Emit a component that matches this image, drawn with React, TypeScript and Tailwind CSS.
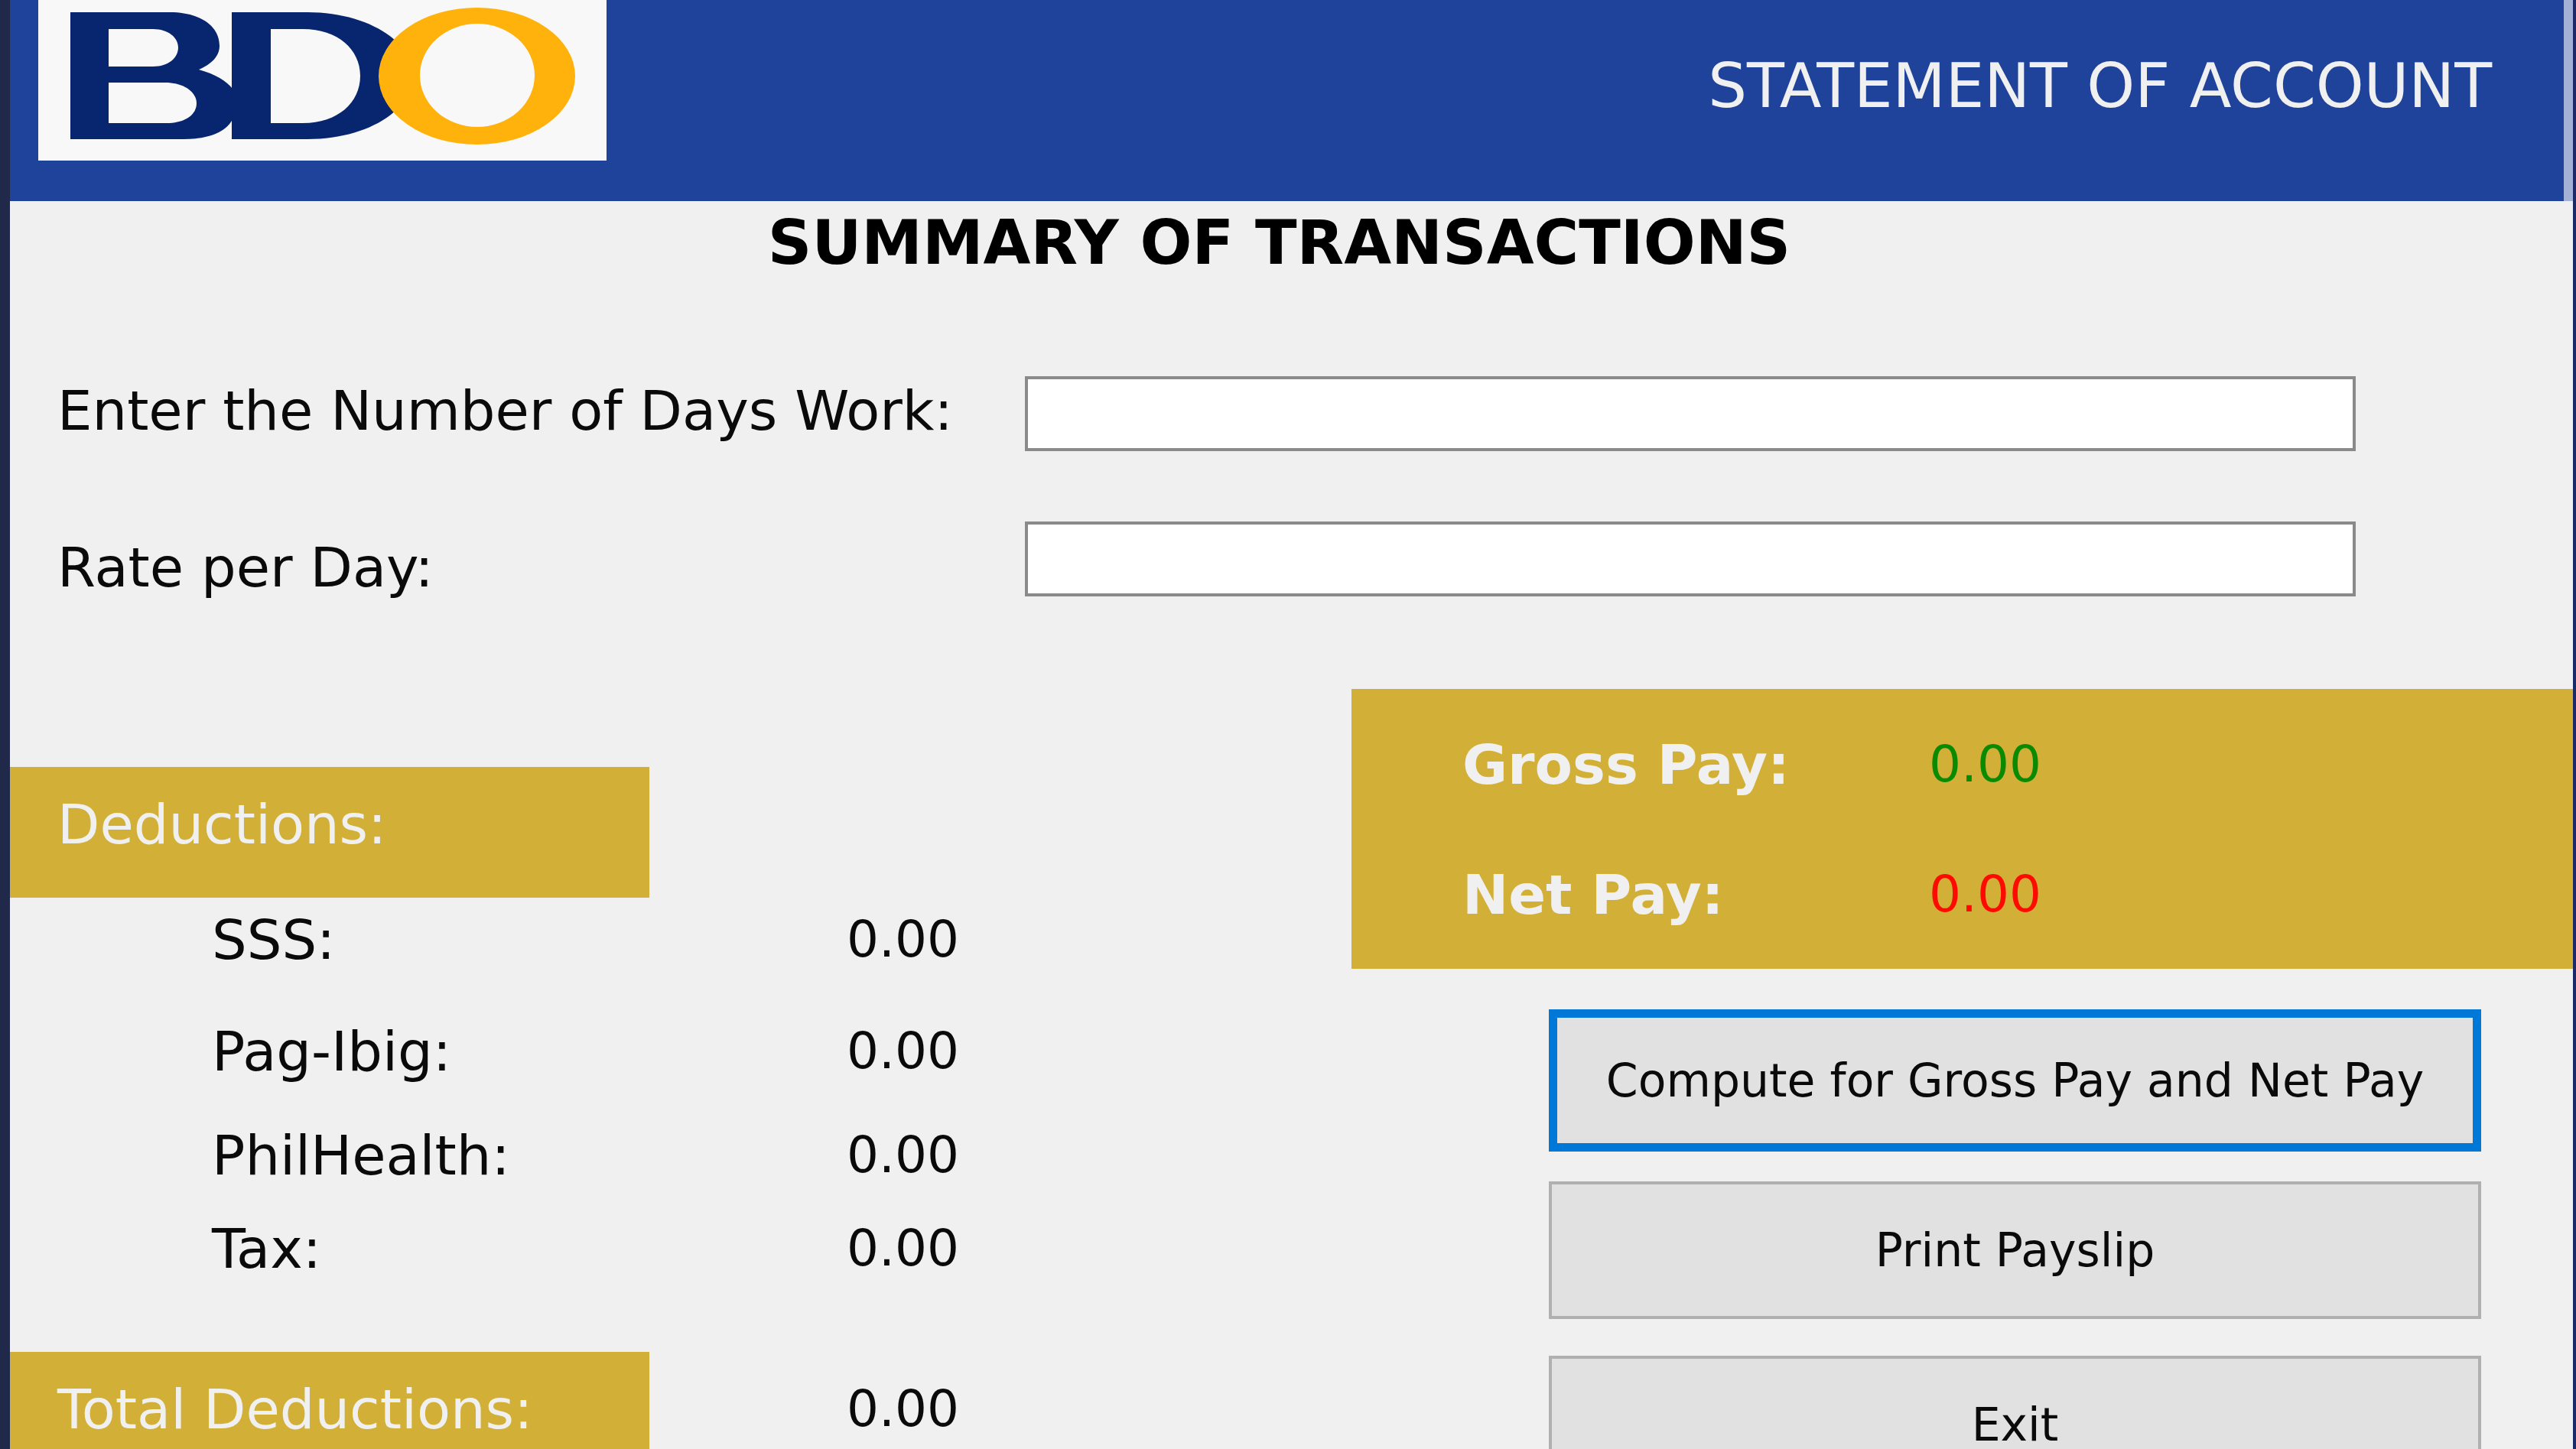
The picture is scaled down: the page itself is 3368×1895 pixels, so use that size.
import React from "react";

function Logo() {
  return (
    <svg
      role="img"
      aria-label="BDO"
      viewBox="0 0 743 210"
      className="h-[210px] w-[743px] shrink-0 bg-[#f8f8f8]"
    >
      <g fill="#08266f" fillRule="evenodd">
        <path d="M42 16H172C212 16 237 34 237 60C237 74 226 84 210 91C232 97 246 106 254 116L262 138L254 156C246 172 224 182 190 182H42ZM92 38V87H150C170 87 183 76 183 62C183 49 170 38 150 38ZM92 108V161H168C192 161 207 150 207 135C207 120 190 108 166 108Z" />
        <path d="M253 16H352C430 16 490 54 490 99C490 144 430 182 352 182H253ZM304 38V161H346C392 161 421 134 421 99C421 65 392 38 346 38Z" />
      </g>
      <ellipse cx="574" cy="99" rx="75" ry="68" fill="#f8f8f8" />
      <path
        fill="#ffb20b"
        fillRule="evenodd"
        d="M445 99.500A128.500 89.500 0 1 1 702 99.500A128.500 89.500 0 1 1 445 99.500ZM499 98.500A75 67.500 0 1 0 649 98.500A75 67.500 0 1 0 499 98.500Z"
      />
    </svg>
  );
}

const fields = [
  { id: "days", label: "Enter the Number of Days Work:" },
  { id: "rate", label: "Rate per Day:" },
];

const deductions = [
  { name: "SSS:", amount: "0.00", gap: "mt-[15px]" },
  { name: "Pag-Ibig:", amount: "0.00", gap: "mt-[66px]" },
  { name: "PhilHealth:", amount: "0.00", gap: "mt-[56px]" },
  { name: "Tax:", amount: "0.00", gap: "mt-[42px]" },
];

export default function App() {
  return (
    <div className="flex h-screen overflow-hidden border-r-4 border-l-[13px] border-r-[#1c2a66] border-l-[#20294a] bg-[#f0f0f0] font-['DejaVu_Sans',sans-serif] text-[72px] leading-[80px] text-[#0a0a0a]">
      <div className="min-w-0 flex-1">
        <header className="flex h-[263px] items-start justify-between border-r-[12px] border-[#a3b1d6] bg-[#1f439a] pl-[37px]">
          <Logo />
          <p className="pt-[73px] pr-[94px] text-[80px] whitespace-nowrap text-[#f0f0f0]">
            STATEMENT OF ACCOUNT
          </p>
        </header>

        <main>
          <h1 className="mt-[15px] pr-[32px] text-center text-[80px] font-bold whitespace-nowrap text-black">
            SUMMARY OF TRANSACTIONS
          </h1>

          <form className="mt-[134px] flex pr-[284px] pl-[62px]">
            <div className="flex w-[1265px] shrink-0 flex-col gap-[125px] pt-[5px] whitespace-nowrap">
              {fields.map((f) => (
                <label key={f.id} htmlFor={f.id}>
                  {f.label}
                </label>
              ))}
            </div>
            <div className="flex min-w-0 flex-1 flex-col gap-[92px]">
              {fields.map((f) => (
                <input
                  key={f.id}
                  id={f.id}
                  type="text"
                  className="h-[98px] w-full border-4 border-[#8a8a8a] bg-white px-4 outline-none"
                />
              ))}
            </div>
          </form>

          <div className="mt-[119px] grid grid-cols-[1754px_1fr]">
            <section className="mt-[102px]">
              <h2 className="h-[171px] w-[836px] bg-[#d2af36] pt-[35px] pl-[62px] text-[#f0f0f0]">
                Deductions:
              </h2>
              <dl>
                {deductions.map((d) => (
                  <div key={d.name} className={`flex pl-[264px] ${d.gap}`}>
                    <dt className="w-[830px]">{d.name}</dt>
                    <dd className="text-[66px]">{d.amount}</dd>
                  </div>
                ))}
                <div className="mt-[95px] flex">
                  <dt className="h-[171px] w-[836px] bg-[#d2af36] pt-[35px] pl-[62px] text-[#f0f0f0]">
                    Total Deductions:
                  </dt>
                  <dd className="pt-[35px] pl-[258px] text-[66px]">0.00</dd>
                </div>
              </dl>
            </section>

            <section>
              <dl className="grid h-[366px] grid-cols-[610px_1fr] content-start gap-y-[90px] bg-[#d2af36] pt-[59px] pl-[145px]">
                <dt className="font-bold text-[#f0f0f0]">Gross Pay:</dt>
                <dd className="text-[66px] text-[#0a8a00]">0.00</dd>
                <dt className="font-bold text-[#f0f0f0]">Net Pay:</dt>
                <dd className="text-[66px] text-[#ff0a00]">0.00</dd>
              </dl>
              <div className="mt-[53px] mr-[120px] ml-[258px] flex flex-col text-[60px] leading-[60px]">
                <button
                  type="button"
                  className="h-[186px] border-[11px] border-[#0078d7] bg-[#e1e1e1] whitespace-nowrap"
                >
                  Compute for Gross Pay and Net Pay
                </button>
                <button
                  type="button"
                  className="mt-[39px] h-[180px] border-4 border-[#b0b0b0] bg-[#e1e1e1]"
                >
                  Print Payslip
                </button>
                <button
                  type="button"
                  className="mt-[48px] h-[180px] border-4 border-[#b0b0b0] bg-[#e1e1e1]"
                >
                  Exit
                </button>
              </div>
            </section>
          </div>
        </main>
      </div>
    </div>
  );
}
